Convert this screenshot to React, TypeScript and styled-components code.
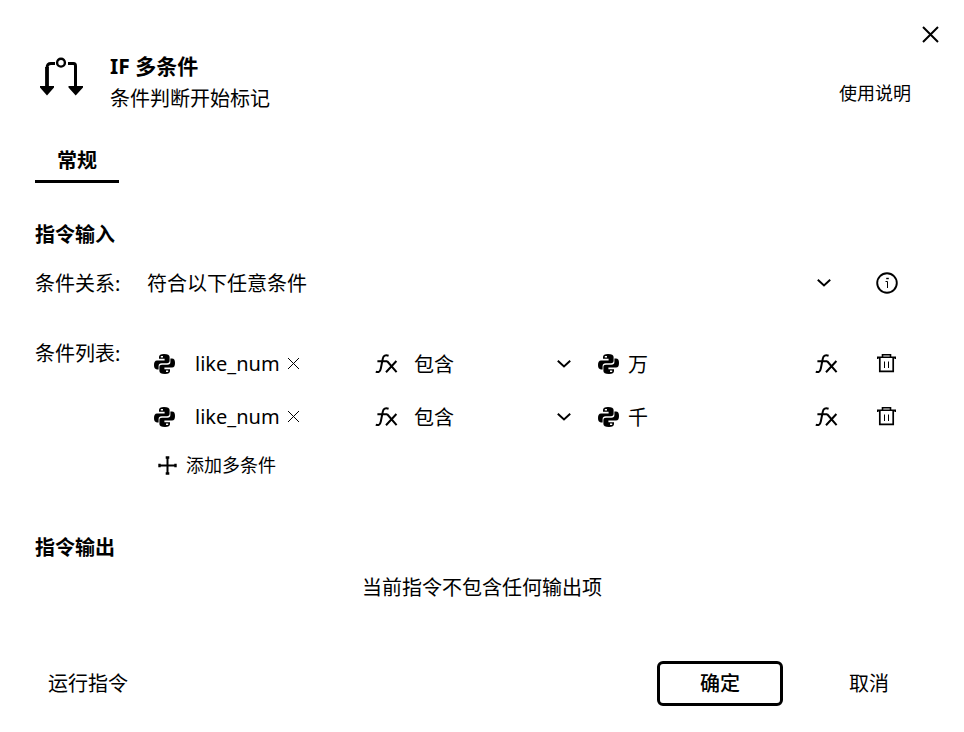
import React, { useState } from "react";
import styled, { createGlobalStyle } from "styled-components";

const GlobalStyle = createGlobalStyle`
  *, *::before, *::after { box-sizing: border-box; }
  body {
    margin: 0;
    background: #fff;
    color: #000;
    font-family: "Noto Sans", "Noto Sans CJK SC", sans-serif;
    font-size: 20px;
    line-height: 30px;
  }
  button, input, select { font: inherit; color: inherit; }
`;

const Dialog = styled.main`
  display: flex;
  flex-direction: column;
  min-height: 100vh;
  padding: 22px 22px 26px 35px;
`;

const PlainButton = styled.button`
  display: inline-flex;
  align-items: center;
  justify-content: center;
  padding: 0;
  border: 0;
  background: none;
  cursor: pointer;
  white-space: nowrap;
`;

const CloseButton = styled(PlainButton)`
  align-self: flex-end;
  width: 24px;
  height: 24px;
`;

const Header = styled.header`
  display: flex;
  align-items: flex-end;
  margin: 4px 31px 0 5px;
`;

const HeaderIcon = styled.span`
  display: flex;
  align-self: flex-start;
  padding-top: 6px;
  width: 70px;
`;

const HeaderText = styled.div`
  flex: 1;
`;

const Title = styled.h1`
  margin: 0;
  font-size: 21px;
  font-weight: 700;
  line-height: 32px;
`;

const Subtitle = styled.p`
  margin: 0;
  line-height: 34px;
`;

const HelpLink = styled.a`
  margin-bottom: 10px;
  font-size: 18px;
  line-height: 26px;
  color: inherit;
  text-decoration: none;
`;

const Tabs = styled.div`
  display: flex;
  margin-top: 21px;
`;

const Tab = styled(PlainButton)`
  height: 46px;
  padding: 4px 22px 0;
  border-bottom: 3px solid #000;
  font-weight: 700;
`;

const SectionTitle = styled.h2<{ $gap: number }>`
  margin: ${(p) => p.$gap}px 0 0;
  font-size: 20px;
  font-weight: 700;
  line-height: 30px;
`;

const FormRow = styled.div<{ $gap: number }>`
  display: grid;
  grid-template-columns: 112px minmax(0, 1fr);
  margin: ${(p) => p.$gap}px 44px 0 0;
`;

const Label = styled.label`
  line-height: 32px;
  padding: 5px 0 3px;
`;

const ListLabel = styled.span`
  line-height: 34px;
`;

const RelationField = styled.div`
  display: grid;
  grid-template-columns: minmax(0, 1fr) 56px;
  align-items: center;
`;

const SelectBox = styled.div<{ $inset: number; $end: number }>`
  display: grid;
  align-items: center;
  > * { grid-area: 1 / 1; }
  > select {
    width: 100%;
    height: 40px;
    padding: 2px 0 0 ${(p) => p.$inset}px;
    border: 0;
    background: none;
    appearance: none;
  }
  > svg {
    justify-self: end;
    margin-right: ${(p) => p.$end}px;
    pointer-events: none;
  }
`;

const ConditionRow = styled.div`
  display: grid;
  grid-template-columns: minmax(0, 255fr) minmax(0, 184fr) minmax(0, 256fr) 56px;
  align-items: center;
  height: 53px;
`;

const Field = styled.div<{ $gap: number; $inset: number }>`
  display: flex;
  align-items: center;
  gap: ${(p) => p.$gap}px;
  min-width: 0;
  padding: 0 4px 0 ${(p) => p.$inset}px;
  > svg { flex: none; }
`;

const Tag = styled.span`
  display: flex;
  flex: 1;
  align-items: center;
  gap: 7px;
  min-width: 0;
`;

const ValueInput = styled.input`
  flex: 1;
  min-width: 0;
  height: 40px;
  padding: 0;
  border: 0;
  background: none;
`;

const EndButton = styled(PlainButton)`
  justify-self: end;
`;

const DeleteButton = styled(EndButton)`
  width: 22px;
  height: 24px;
`;

const AddButton = styled(PlainButton)`
  gap: 9px;
  height: 44px;
  margin-left: 11px;
  font-size: 18px;
`;

const Empty = styled.p`
  margin: 10px 13px 0 0;
  text-align: center;
`;

const Footer = styled.footer`
  display: flex;
  align-items: center;
  margin-top: auto;
  padding: 0 53px 0 13px;
`;

const ConfirmButton = styled(PlainButton)`
  width: 126px;
  height: 45px;
  margin: 0 66px 0 auto;
  border: 3px solid #000;
  border-radius: 6px;
  font-weight: 500;
`;

const BranchIcon = () => (
  <svg width="44" height="40" viewBox="0 0 44 40" fill="none" stroke="#000" aria-hidden="true">
    <circle cx="21" cy="6.7" r="3.9" strokeWidth="2.4" />
    <path d="M15 7.5H11Q7 7.5 7 12" strokeWidth="2.8" />
    <path d="M7 11V31" strokeWidth="3.8" />
    <path d="M28 7.5H33.5Q35.5 7.5 35.5 10V31" strokeWidth="3" />
    <path d="M0 30H14V31.5L7 39.5L0 31.5zM28.5 30H43V31.5L35.7 39.5L28.5 31.5z" fill="#000" stroke="none" />
  </svg>
);

const PythonIcon = () => (
  <svg width="21" height="20" viewBox="0 0 21 20" fill="#000" fillRule="evenodd" aria-hidden="true">
    <path d="M5 4.8V3Q5 0 10 0Q15.6 0 15.6 3V6.8Q15.6 9.2 13 9.2H7.6Q4.6 9.2 4.6 12V15.4H3Q0 15.4 0 11Q0 6.4 3 6.4H10.6V4.8ZM6.8 2H9V3.4H6.8Z" />
    <path d="M16 15.2V17Q16 20 11 20Q5.4 20 5.4 17V13.2Q5.4 10.8 8 10.8H13.4Q16.4 10.8 16.4 8V4.6H18Q21 4.6 21 9Q21 13.6 18 13.6H10.4V15.2ZM14.2 18H12V16.6H14.2Z" />
  </svg>
);

const Cross = ({ size, stroke }: { size: number; stroke: number }) => (
  <svg width={size} height={size} viewBox={`0 0 ${size} ${size}`} stroke="#000" strokeWidth={stroke} aria-hidden="true">
    <path d={`M1 1L${size - 1} ${size - 1}M${size - 1} 1L1 ${size - 1}`} />
  </svg>
);

const Chevron = () => (
  <svg width="14" height="8" viewBox="0 0 14 8" fill="none" stroke="#000" strokeWidth="2" aria-hidden="true">
    <path d="M0.8 0.8L7 6.4L13.2 0.8" />
  </svg>
);

const InfoIcon = () => (
  <svg width="22" height="22" viewBox="0 0 22 22" fill="none" stroke="#000" aria-hidden="true">
    <circle cx="11" cy="11" r="9.8" strokeWidth="1.9" />
    <path d="M9.5 9.5H11.5V16" strokeWidth="1" />
    <path d="M10.2 6.5H12.8" strokeWidth="1.4" />
  </svg>
);

const FxIcon = () => (
  <svg width="23" height="20" viewBox="0 0 23 20" fill="none" stroke="#000" strokeWidth="2" aria-hidden="true">
    <path d="M0.8 17.6Q4.8 19.4 5.8 14.5L7.8 4.6Q8.8 0.2 13.6 1.8M2.4 7.2H12" />
    <path d="M12 7L21.6 18.2M21.4 7L11 18.2" />
  </svg>
);

const TrashIcon = () => (
  <svg width="20" height="19" viewBox="0 0 20 19" fill="none" stroke="#000" aria-hidden="true">
    <path d="M0.8 5V3.3H18.2V5" strokeWidth="1.6" />
    <path d="M5.5 3V0.8H13.5V3" strokeWidth="1.6" />
    <path d="M2.8 4V17.3H16.2V4" strokeWidth="1.7" />
    <path d="M7.5 7.5V14M11.5 7.5V14" strokeWidth="1" />
  </svg>
);

const PlusIcon = () => (
  <svg width="19" height="19" viewBox="0 0 19 19" fill="none" stroke="#000" aria-hidden="true">
    <path d="M9.5 1V18M1 9.5H18" strokeWidth="2" />
    <path d="M7.7 1.5H11.3M7.7 17.5H11.3M1.5 7.7V11.3M17.5 7.7V11.3" strokeWidth="2.4" />
  </svg>
);

const conditions = [
  { variable: "like_num", value: "万" },
  { variable: "like_num", value: "千" },
];

const Condition = ({ variable, value }: { variable: string; value: string }) => {
  const [text, setText] = useState(value);
  return (
    <ConditionRow>
      <Field $gap={20} $inset={7}>
        <PythonIcon />
        <Tag>
          {variable}
          <PlainButton type="button" aria-label="移除变量">
            <Cross size={13} stroke={1} />
          </PlainButton>
        </Tag>
        <PlainButton type="button" aria-label="表达式">
          <FxIcon />
        </PlainButton>
      </Field>
      <SelectBox $inset={12} $end={15}>
        <select aria-label="运算符">
          <option>包含</option>
        </select>
        <Chevron />
      </SelectBox>
      <Field $gap={9} $inset={12}>
        <PythonIcon />
        <ValueInput aria-label="比较值" value={text} onChange={(e) => setText(e.target.value)} />
        <PlainButton type="button" aria-label="表达式">
          <FxIcon />
        </PlainButton>
      </Field>
      <DeleteButton type="button" aria-label="删除条件">
        <TrashIcon />
      </DeleteButton>
    </ConditionRow>
  );
};

export default function App() {
  return (
    <>
      <GlobalStyle />
      <Dialog>
        <CloseButton type="button" aria-label="关闭">
          <Cross size={17} stroke={2} />
        </CloseButton>
        <Header>
          <HeaderIcon>
            <BranchIcon />
          </HeaderIcon>
          <HeaderText>
            <Title>IF 多条件</Title>
            <Subtitle>条件判断开始标记</Subtitle>
          </HeaderText>
          <HelpLink href="#help">使用说明</HelpLink>
        </Header>
        <Tabs role="tablist">
          <Tab type="button" role="tab" aria-selected="true">
            常规
          </Tab>
        </Tabs>

        <SectionTitle $gap={37}>指令输入</SectionTitle>
        <FormRow $gap={13}>
          <Label htmlFor="relation">条件关系:</Label>
          <RelationField>
            <SelectBox $inset={0} $end={11}>
              <select id="relation">
                <option>符合以下任意条件</option>
              </select>
              <Chevron />
            </SelectBox>
            <EndButton type="button" aria-label="说明">
              <InfoIcon />
            </EndButton>
          </RelationField>
        </FormRow>
        <FormRow $gap={34} role="group" aria-labelledby="conditions">
          <ListLabel id="conditions">条件列表:</ListLabel>
          <div>
            {conditions.map((c) => (
              <Condition key={c.value} {...c} />
            ))}
            <AddButton type="button">
              <PlusIcon />
              添加多条件
            </AddButton>
          </div>
        </FormRow>

        <SectionTitle $gap={46}>指令输出</SectionTitle>
        <Empty>当前指令不包含任何输出项</Empty>

        <Footer>
          <PlainButton type="button">运行指令</PlainButton>
          <ConfirmButton type="button">确定</ConfirmButton>
          <PlainButton type="button">取消</PlainButton>
        </Footer>
      </Dialog>
    </>
  );
}
